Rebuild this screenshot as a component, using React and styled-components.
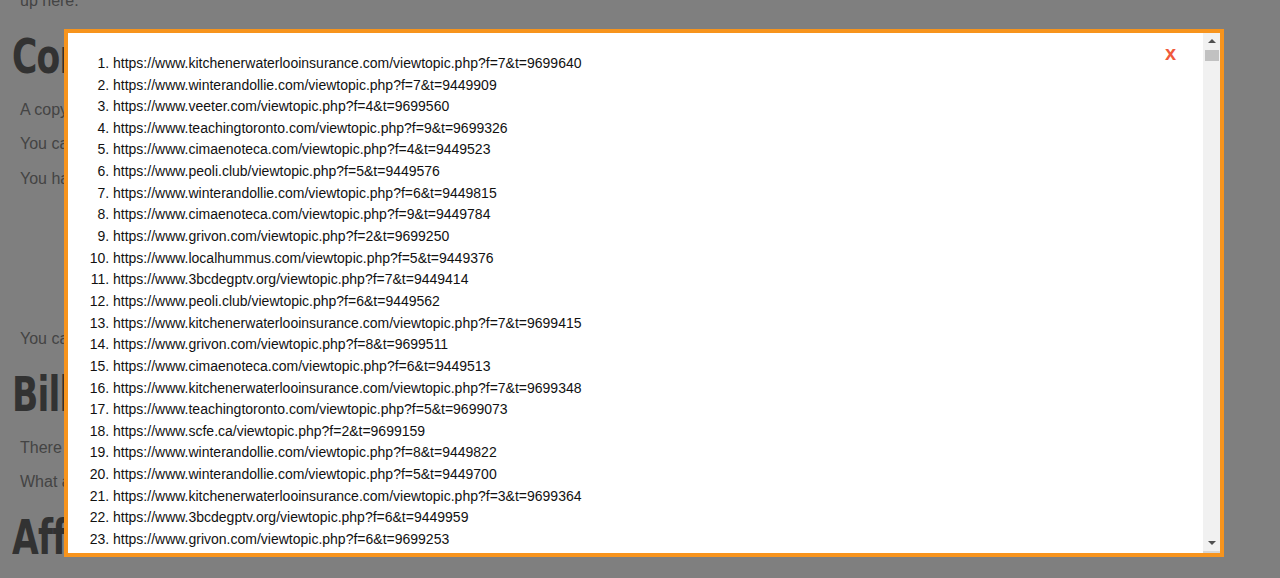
import React from "react";
import styled, { createGlobalStyle } from "styled-components";

const Global = createGlobalStyle`
  html, body { margin: 0; padding: 0; background: #fff; }
  body { font-family: "Liberation Sans", Arial, sans-serif; overflow: hidden; height: 578px; }
`;

const Page = styled.div`
  padding: 0 20px;
  height: 578px;
  overflow: hidden;
`;

const Para = styled.p`
  margin: 0 0 10.5px;
  font-size: 16px;
  line-height: 24px;
  color: #888;
  white-space: nowrap;
  &:first-child { margin-top: -35px; }
`;

const Heading = styled.h2`
  margin: 19px 0 17.5px -8px;
  font-family: "DejaVu Sans Condensed", "DejaVu Sans", sans-serif;
  font-stretch: condensed;
  font-weight: 900;
  font-size: 48px;
  line-height: 48px;
  letter-spacing: -1px;
  color: #646464;
  transform: scaleX(0.8);
  transform-origin: left center;
  white-space: nowrap;
`;

const Spacer = styled.div`
  height: 126px;
`;

const Backdrop = styled.div`
  position: fixed;
  inset: 0;
  background: rgba(0, 0, 0, 0.5);
`;

const Modal = styled.div`
  position: fixed;
  left: 5%;
  top: 5%;
  width: 90%;
  height: 90%;
  border: 4px solid #f7941d;
  background: #fff;
  display: flex;
`;

const Scroller = styled.div`
  box-sizing: border-box;
  flex: 1;
  min-width: 0;
  height: 100%;
  overflow-y: scroll;
  scrollbar-width: none;
  padding: 5px;
  &::-webkit-scrollbar { display: none; }
`;

const ScrollBar = styled.div`
  width: 17px;
  flex: none;
  background: #f1f1f1;
  display: flex;
  flex-direction: column;
  border-bottom: 2px solid #d6d6d6;
  box-sizing: border-box;
`;

const ArrowButton = styled.div`
  height: 17px;
  flex: none;
  display: flex;
  align-items: center;
  justify-content: center;
  &::before {
    content: "";
    width: 0;
    height: 0;
    border-left: 4px solid transparent;
    border-right: 4px solid transparent;
    ${(p) =>
      p.$down
        ? "border-top: 4px solid #505050;"
        : "border-bottom: 4px solid #505050;"}
  }
`;

const Track = styled.div`
  flex: 1;
`;

const Thumb = styled.div`
  height: 11px;
  margin: 0 1px 0 2px;
  background: #c1c1c1;
`;

const Close = styled.span`
  position: absolute;
  top: 9px;
  right: 44px;
  font-family: "Liberation Sans", Arial, sans-serif;
  font-weight: 700;
  font-size: 20px;
  color: #f05a3c;
  cursor: pointer;
`;

const List = styled.ol`
  margin: 15px 0 14px;
  padding-left: 40px;
  font-size: 14px;
  line-height: 21.64px;
  color: #111;
`;

const Item = styled.li``;

const first = [
  "https://www.kitchenerwaterlooinsurance.com/viewtopic.php?f=7&t=9699640",
  "https://www.winterandollie.com/viewtopic.php?f=7&t=9449909",
  "https://www.veeter.com/viewtopic.php?f=4&t=9699560",
  "https://www.teachingtoronto.com/viewtopic.php?f=9&t=9699326",
  "https://www.cimaenoteca.com/viewtopic.php?f=4&t=9449523",
  "https://www.peoli.club/viewtopic.php?f=5&t=9449576",
  "https://www.winterandollie.com/viewtopic.php?f=6&t=9449815",
  "https://www.cimaenoteca.com/viewtopic.php?f=9&t=9449784",
  "https://www.grivon.com/viewtopic.php?f=2&t=9699250",
  "https://www.localhummus.com/viewtopic.php?f=5&t=9449376",
  "https://www.3bcdegptv.org/viewtopic.php?f=7&t=9449414",
  "https://www.peoli.club/viewtopic.php?f=6&t=9449562",
  "https://www.kitchenerwaterlooinsurance.com/viewtopic.php?f=7&t=9699415",
  "https://www.grivon.com/viewtopic.php?f=8&t=9699511",
  "https://www.cimaenoteca.com/viewtopic.php?f=6&t=9449513",
  "https://www.kitchenerwaterlooinsurance.com/viewtopic.php?f=7&t=9699348",
  "https://www.teachingtoronto.com/viewtopic.php?f=5&t=9699073",
  "https://www.scfe.ca/viewtopic.php?f=2&t=9699159",
  "https://www.winterandollie.com/viewtopic.php?f=8&t=9449822",
  "https://www.winterandollie.com/viewtopic.php?f=5&t=9449700",
  "https://www.kitchenerwaterlooinsurance.com/viewtopic.php?f=3&t=9699364",
  "https://www.3bcdegptv.org/viewtopic.php?f=6&t=9449959",
  "https://www.grivon.com/viewtopic.php?f=6&t=9699253",
];

const domains = [
  ["kitchenerwaterlooinsurance.com", 9699000],
  ["winterandollie.com", 9449000],
  ["veeter.com", 9699000],
  ["teachingtoronto.com", 9699000],
  ["cimaenoteca.com", 9449000],
  ["peoli.club", 9449000],
  ["grivon.com", 9699000],
  ["localhummus.com", 9449000],
  ["3bcdegptv.org", 9449000],
  ["scfe.ca", 9699000],
];

function buildUrls() {
  const out = [...first];
  let seed = 12345;
  const rnd = () => {
    seed = (seed * 1103515245 + 12345) % 2147483648;
    return seed / 2147483648;
  };
  while (out.length < 60) {
    const [d, base] = domains[Math.floor(rnd() * domains.length)];
    const f = 2 + Math.floor(rnd() * 8);
    const t = base + Math.floor(rnd() * 1000);
    out.push(`https://www.${d}/viewtopic.php?f=${f}&t=${t}`);
  }
  return out;
}

const urls = buildUrls();

export default function App() {
  return (
    <>
      <Global />
      <Page>
        <Para>
          Your order details and account information will show
          <br />
          up here.
        </Para>
        <Heading>Contact</Heading>
        <Para>A copy of your receipt has been sent to your email address.</Para>
        <Para>You can change your contact details at any time.</Para>
        <Para>You have not added a phone number yet.</Para>
        <Spacer />
        <Para>You can update your password from the settings page.</Para>
        <Heading>Billing</Heading>
        <Para>There are no invoices on your account.</Para>
        <Para>What a payment method do you want to use?</Para>
        <Heading>Affiliates</Heading>
      </Page>
      <Backdrop />
      <Modal>
        <Scroller>
          <List>
            {urls.map((u, i) => (
              <Item key={i}>{u}</Item>
            ))}
          </List>
        </Scroller>
        <ScrollBar>
          <ArrowButton />
          <Track>
            <Thumb />
          </Track>
          <ArrowButton $down />
        </ScrollBar>
        <Close>x</Close>
      </Modal>
    </>
  );
}
